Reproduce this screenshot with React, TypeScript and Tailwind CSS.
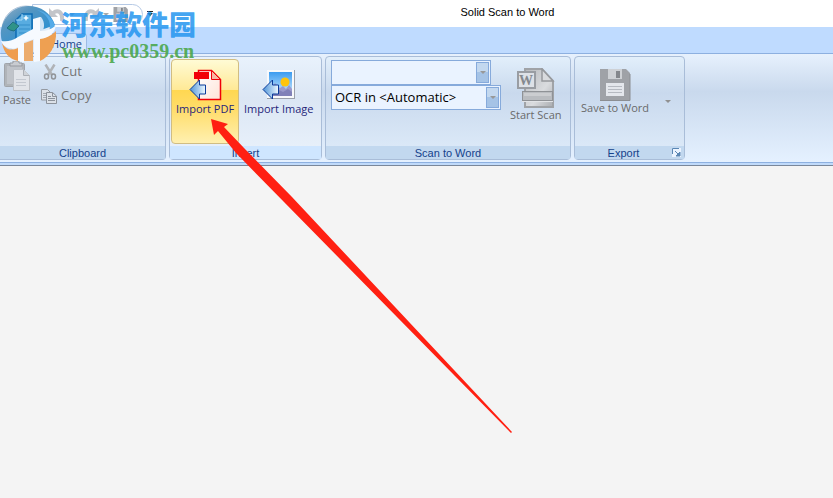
import type { ReactNode } from "react";
import clsx from "clsx";

function PasteIcon() {
  return (
    <svg width="27" height="31" viewBox="0 0 27 31" aria-hidden="true">
      <rect x="0.5" y="2.5" width="20" height="23" rx="1" fill="#b0b4b9" stroke="#a0a4aa" />
      <rect x="3" y="5" width="15" height="18" fill="#bfc3c9" />
      <path d="M6 5V2h3V0h6v2h3v3z" fill="#c9ccd1" stroke="#95999f" />
      <path d="M9.500 8.500h10l6 6v15h-16z" fill="#e1e4e9" stroke="#bcc0c6" />
      <path d="M19.500 8.500v6h6" fill="#cfd3d8" stroke="#acb0b6" />
      <path d="M12 18.500h10M12 21.500h10M12 24.500h10" stroke="#c3c8d0" />
    </svg>
  );
}

function CutIcon() {
  return (
    <svg width="14" height="16" viewBox="0 0 14 16" aria-hidden="true">
      <path d="M2.500 0.500L9 11M11.500 0.500L5 11" stroke="#b0b3b7" strokeWidth="2.500" />
      <ellipse cx="3.500" cy="12.500" rx="2" ry="2.500" fill="none" stroke="#919498" strokeWidth="1.500" />
      <ellipse cx="10.500" cy="12.500" rx="2" ry="2.500" fill="none" stroke="#919498" strokeWidth="1.500" />
    </svg>
  );
}

function CopyIcon() {
  return (
    <svg width="16" height="15" viewBox="0 0 16 15" aria-hidden="true">
      <path d="M0.500 0.500h6l3 3v7.500h-9z" fill="#dce1e8" stroke="#9499a1" />
      <path d="M2 4.500h3M2 6.500h3M2 8.500h3" stroke="#a3a9b2" />
      <path d="M5.500 3.500h6l4 3.500v7.500h-10z" fill="#dce1e8" stroke="#8c929b" />
      <path d="M11.500 3.500v4h4M7 7.500h3M7 9.500h7M7 11.500h7" fill="none" stroke="#8c929b" />
    </svg>
  );
}

function ImportArrow() {
  return (
    <path
      d="M1 20.500L10.500 11v5h6v9h-6v5z"
      fill="url(#arrowFill)"
      stroke="#0b3b9a"
      strokeLinejoin="miter"
    />
  );
}

function ImportPdfIcon() {
  return (
    <svg width="33" height="33" viewBox="0 0 33 33" aria-hidden="true">
      <defs>
        <linearGradient id="arrowFill" x1="0" x2="1">
          <stop offset="0" stopColor="#4f94d8" />
          <stop offset="1" stopColor="#eef8ff" />
        </linearGradient>
        <linearGradient id="pdfPage" x1="0" y1="0" x2="1" y2="1">
          <stop offset="0" stopColor="#fff" />
          <stop offset="1" stopColor="#ffe3d8" />
        </linearGradient>
      </defs>
      <path d="M9.500 1.500h13l9 9v20h-22z" fill="url(#pdfPage)" stroke="#f00008" strokeWidth="1.500" />
      <path d="M22.500 1.500v9h9z" fill="#f8b9a4" stroke="#f00008" />
      <rect x="5" y="3" width="15" height="7" fill="#f20008" />
      <ImportArrow />
    </svg>
  );
}

function ImportImageIcon() {
  return (
    <svg width="33" height="33" viewBox="0 0 33 33" aria-hidden="true">
      <defs>
        <linearGradient id="sky" x1="0" x2="0" y1="0" y2="1">
          <stop offset="0" stopColor="#3c9cf0" />
          <stop offset="1" stopColor="#d8efff" />
        </linearGradient>
      </defs>
      <rect x="5" y="1" width="28" height="29" fill="#9aa0ab" />
      <rect x="5" y="1" width="27" height="28" fill="#f8f9fb" />
      <rect x="7" y="3" width="23" height="24" fill="url(#sky)" />
      <circle cx="23" cy="13" r="4.500" fill="#ffc40c" />
      <path d="M7 21l6-7 5 5 3-2 3 3 3-4 3 4v7H7z" fill="#9a9acb" />
      <path d="M7 27l10-6 4 2 5-3 4 3v4z" fill="#8181b8" />
      <ImportArrow />
    </svg>
  );
}

function StartScanIcon() {
  return (
    <svg width="38" height="40" viewBox="0 0 38 40" aria-hidden="true">
      <defs>
        <linearGradient id="scanPage" x1="0" y1="0" x2="1" y2="1">
          <stop offset="0" stopColor="#b6b9bd" />
          <stop offset="0.6" stopColor="#dadcdf" />
          <stop offset="1" stopColor="#a9acb0" />
        </linearGradient>
      </defs>
      <path d="M8 1h17l11 12v26H8z" fill="url(#scanPage)" stroke="#a0a3a7" strokeWidth="2" />
      <path d="M25 1v12h11z" fill="#d9dbde" stroke="#96999d" strokeWidth="1.500" />
      <rect x="1" y="4" width="17" height="16" fill="#dde1e7" stroke="#999da3" strokeWidth="2" />
      <text
        x="9"
        y="17"
        textAnchor="middle"
        fill="#84898f"
        className="font-['Liberation_Serif',serif] text-[14px] font-bold"
      >
        W
      </text>
      <rect x="5.500" y="23.500" width="30" height="9" fill="#b9bcc0" stroke="#8f9296" />
      <path d="M7 25h27v3H7z" fill="#cbcdd0" />
      <path d="M5 33.500h31" stroke="#e1e3e6" />
    </svg>
  );
}

function DiskIcon({ size }: { size: number }) {
  return (
    <svg width={size} height={size} viewBox="0 0 32 32" aria-hidden="true">
      <path d="M1 0h26l4 4v28H1z" fill="#9fa2a7" />
      <path d="M1 31.500h30V5" fill="none" stroke="#8b8e92" />
      <rect x="9" y="0" width="14" height="10" fill="#ced1d5" />
      <rect x="17" y="2" width="4" height="7" fill="#84878c" />
      <rect x="7" y="14" width="18" height="13" fill="#e4e7ec" />
      <path d="M9 17.500h14M9 20.500h14M9 23.500h14" stroke="#b6bac1" />
    </svg>
  );
}

function UndoIcon({ flipped = false }: { flipped?: boolean }) {
  return (
    <svg
      width="16"
      height="14"
      viewBox="0 0 16 14"
      className={clsx(flipped && "-scale-x-100")}
      aria-hidden="true"
    >
      <path d="M4 5c5-4 10-1 9 8" fill="none" stroke="#c3c5c9" strokeWidth="4" />
      <path d="M0 0v9h9z" fill="#c3c5c9" />
    </svg>
  );
}

function Caret({ className }: { className: string }) {
  return (
    <svg width="6" height="3" viewBox="0 0 6 3" className={className} aria-hidden="true">
      <path d="M0 0h6L3 3z" fill="currentColor" />
    </svg>
  );
}

function LauncherIcon() {
  return (
    <svg width="9" height="9" viewBox="0 0 9 9" aria-hidden="true">
      <path d="M0.500 6V0.500H7" fill="none" stroke="#5a86b4" />
      <path d="M3 3l3 3M8 4v4H4z" fill="#5a86b4" stroke="#5a86b4" />
    </svg>
  );
}

function Group({
  title,
  className,
  active = false,
  action,
  children,
}: {
  title: string;
  className: string;
  active?: boolean;
  action?: ReactNode;
  children: ReactNode;
}) {
  return (
    <section
      className={clsx(
        "flex h-[104px] shrink-0 flex-col rounded-sm border border-[#a9bdd8]",
        active
          ? "bg-linear-to-b from-[#e9f2fc] via-[#dbe6f4] via-40% to-[#eaf2fb]"
          : "bg-linear-to-b from-[#e2effb] via-[#c9d9ed] via-35% to-[#dfecfa]",
        className
      )}
    >
      <div className="flex flex-1 items-start">{children}</div>
      <div
        className={clsx(
          "flex h-[13px] items-center",
          active ? "bg-[#cfe6ff]" : "bg-[#c2d8ef]"
        )}
      >
        <h2 className="flex-1 text-center font-['Liberation_Sans',sans-serif] text-[11px] leading-[14px] text-[#15428b]">
          {title}
        </h2>
        {action}
      </div>
    </section>
  );
}

function Combo({ label, value, className }: { label: string; value: string; className: string }) {
  return (
    <div className={clsx("relative h-[25px]", className)}>
      <select
        aria-label={label}
        defaultValue={value}
        className="h-full w-full appearance-none border border-[#86aadb] bg-[#eaf3ff] pr-5 pl-[3px] text-[13px] text-black"
      >
        <option value={value}>{value}</option>
      </select>
      <span className="pointer-events-none absolute top-[2px] right-[2px] flex h-[21px] w-[13px] items-center justify-center border border-[#86aadb] bg-linear-to-b from-[#c3d8ef] from-50% to-[#a5c3e6] to-50%">
        <Caret className="text-[#989898]" />
      </span>
    </div>
  );
}

function Watermark() {
  return (
    <div className="pointer-events-none absolute top-0 left-0 flex">
      <svg width="61" height="64" viewBox="0 0 61 64" aria-hidden="true">
        <defs>
          <linearGradient id="orb" x1="0" y1="0" x2="1" y2="1">
            <stop offset="0" stopColor="#9db4c8" />
            <stop offset="0.3" stopColor="#5796c0" />
            <stop offset="0.7" stopColor="#3391cf" />
            <stop offset="1" stopColor="#4aa5e4" />
          </linearGradient>
        </defs>
        <circle cx="26" cy="30" r="24" fill="#dfebf8" stroke="#b3c5da" />
        <path
          d="M1 36C0 20 12 6 28 6c13 0 23 7 27 19l-14 5V18l-8 3v9l-14 8v4L3 43C2 41 1 39 1 36z"
          fill="url(#orb)"
        />
        <path d="M37 10c10 4 14 11 13 20l5-3C53 18 47 12 37 10z" fill="#55abe8" />
        <path d="M41 17c3 4 4 8 2 13l-3 1V17z" fill="#cfe3f5" />
        <path d="M16 20l6-6h10v20l-10 5h-6z" fill="#58ace0" stroke="#0d6cb4" strokeWidth="1.500" />
        <path d="M22 14v6h-6" fill="none" stroke="#a9d9f5" />
        <path d="M26 15l1 2 2 1-2 1-1 2-1-2-2-1 2-1z" fill="#eefaff" />
        <path d="M19 25h11M19 29h11M19 33h11" stroke="#348fca" />
        <path d="M7 28l6-6 6 4-5 5-4-1z" fill="#2f9388" stroke="#226f80" />
        <path d="M2 43c4 7 9 8 16 5v13C9 59 4 53 2 43z" fill="#ef9d4e" />
        <path d="M22 44l11-4v21h-9z" fill="#ecac6d" />
        <path d="M40 38c7 0 12-3 16-7 1 15-7 26-16 30z" fill="#eea052" />
        <path
          d="M1 41c6 1 11 0 17-4l15-8V19l7-2v14c7 0 12-2 16-6-1 8-7 13-16 14v22l-6 1V39l-10 3v20l-6-1V47C12 50 5 49 1 41z"
          fill="#f6faff"
        />
      </svg>
      <div className="flex flex-col pt-[7px]">
        <span className="h-[34px] font-['Noto_Sans_CJK_SC',sans-serif] text-[27px] leading-[34px] font-black text-[#2395ef]/85">
          河东软件园
        </span>
        <span className="pl-px font-['Liberation_Serif',serif] text-[20px] leading-5 font-bold text-[#49a649]/90">
          www.pc0359.cn
        </span>
      </div>
    </div>
  );
}

export default function App() {
  return (
    <div className="relative min-h-screen overflow-hidden bg-[#f4f4f4] font-['Open_Sans','Noto_Sans',sans-serif] text-[11px]">
      <header className="relative flex h-[27px] items-start bg-white">
        <div className="mt-1 ml-8 flex h-[21px] w-[111px] items-center gap-1 rounded-r-full border border-[#b5c9e5] pl-4">
          <button aria-label="Undo" disabled>
            <UndoIcon />
          </button>
          <Caret className="text-[#aaa]" />
          <button aria-label="Redo" disabled className="ml-1">
            <UndoIcon flipped />
          </button>
          <Caret className="text-[#aaa]" />
          <button aria-label="Save" disabled>
            <DiskIcon size={15} />
          </button>
        </div>
        <button
          aria-label="Customize toolbar"
          className="mt-[11px] ml-1 flex flex-col items-center gap-px border-t border-[#222] pt-px"
        >
          <Caret className="text-[#111]" />
        </button>
        <h1 className="absolute inset-x-0 top-1 ml-[182px] text-center font-['Liberation_Sans',sans-serif] text-[11px] leading-4 text-black">
          Solid Scan to Word
        </h1>
      </header>

      <nav className="flex h-[27px] items-end border-b border-[#8db0e0] bg-[#bfdbff] pl-[46px]">
        <a
          href="#home"
          className="flex h-5 w-[41px] items-center justify-center rounded-t-sm border border-b-0 border-[#9dbbe4] bg-[#dbe9fa] pt-px text-[#15428b]"
        >
          Home
        </a>
      </nav>

      <main className="flex gap-[3px] border-b border-[#8db0e0] bg-linear-to-b from-[#e7f1fd] via-[#c9d9ed] via-35% to-[#e5f1ff] pt-[2px] pb-[2px]">
        <Group title="Clipboard" className="w-[166px] rounded-l-none border-l-0">
          <button disabled className="mt-1 ml-px flex w-8 flex-col items-center text-[#6a6a6a]">
            <PasteIcon />
            <span className="leading-4">Paste</span>
          </button>
          <div className="mt-[3px] ml-2 flex flex-col text-[13px] text-[#747474]">
            <button disabled className="flex h-6 items-center gap-1 pl-[2px]">
              <CutIcon />
              Cut
            </button>
            <button disabled className="flex h-6 items-center gap-1">
              <CopyIcon />
              Copy
            </button>
          </div>
        </Group>

        <Group title="Insert" className="w-[153px]" active>
          <button className="mt-[2px] ml-px flex h-[85px] w-[68px] flex-col items-center rounded-sm border border-[#d1bd83] pt-[9px] text-[#26267a] [background-image:linear-gradient(#fffbd5,#ffe996_36%,#ffd751_36%,#ffdd6b_60%,#fff0b0)]">
            <ImportPdfIcon />
            <span className="leading-[14px] whitespace-nowrap">Import PDF</span>
          </button>
          <button className="mt-3 ml-[5px] flex flex-col items-center text-[#26267a]">
            <ImportImageIcon />
            <span className="leading-[14px] whitespace-nowrap">Import Image</span>
          </button>
        </Group>

        <Group title="Scan to Word" className="w-[246px]">
          <div className="mt-[3px] ml-[5px] flex flex-col">
            <Combo label="Scanner" value="" className="w-[160px]" />
            <Combo label="OCR language" value="OCR in <Automatic>" className="w-[170px]" />
          </div>
          <button disabled className="mt-[11px] ml-[9px] flex flex-col items-center text-[#6a6a6a]">
            <StartScanIcon />
            <span className="leading-[14px] whitespace-nowrap">Start Scan</span>
          </button>
        </Group>

        <Group
          title="Export"
          className="w-[111px]"
          action={
            <button aria-label="Export options" className="mr-[3px] bg-[#eaf3ff]">
              <LauncherIcon />
            </button>
          }
        >
          <button disabled className="mt-3 ml-[6px] flex items-end text-[#6a6a6a]">
            <span className="flex flex-col items-center">
              <DiskIcon size={32} />
              <span className="leading-[14px] whitespace-nowrap">Save to Word</span>
            </span>
            <Caret className="mb-3 ml-4 text-[#909090]" />
          </button>
        </Group>
      </main>
      <div className="h-[3px] border-b border-[#7a879a] bg-[#c0dafa]" />

      <Watermark />
      <svg
        width="833"
        height="498"
        viewBox="0 0 833 498"
        className="pointer-events-none absolute top-0 left-0"
        aria-hidden="true"
      >
        <path d="M211 119L228 124 224 127 244 148 292 197 512 432 511 433 284 202 236 153 218 131 214 135z" fill="#ff2012" />
      </svg>
    </div>
  );
}
